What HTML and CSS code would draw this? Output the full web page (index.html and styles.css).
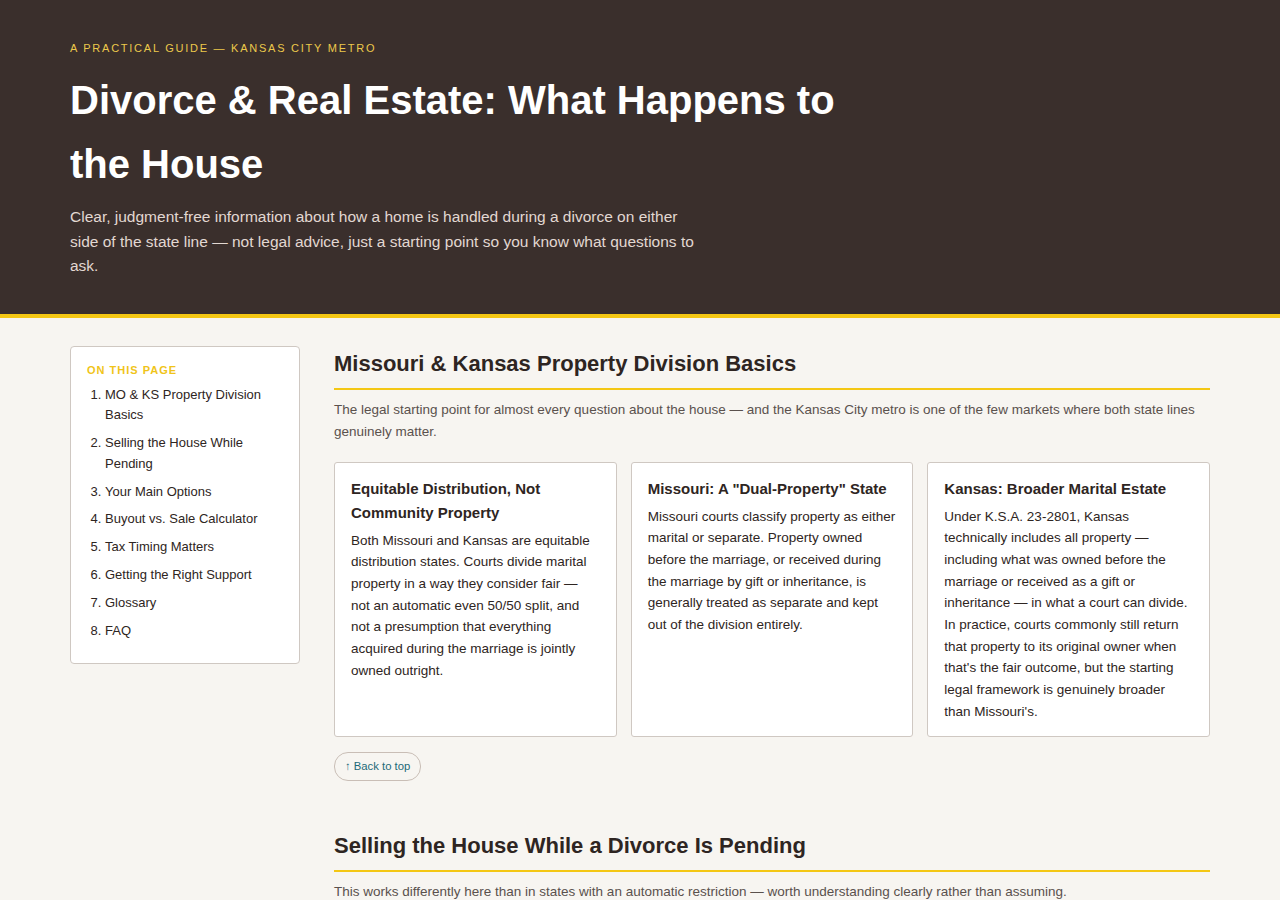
FILE: index.html
```html
<!DOCTYPE html>
<html lang="en">
<head>
  <meta charset="UTF-8">
  <title>Divorce &amp; Real Estate - Kansas City Metro</title>
  <link rel="stylesheet" href="styles.css">
</head>
<body id="top">

  <header class="hero">
    <div class="wrap">
      <p class="eyebrow">A Practical Guide — Kansas City Metro</p>
      <h1>Divorce &amp; Real Estate: What Happens to the House</h1>
      <p class="lead">Clear, judgment-free information about how a home is handled during a divorce on either side of the state line — not legal advice, just a starting point so you know what questions to ask.</p>
    </div>
  </header>

  <div class="wrap layout">
    <aside class="toc">
      <h4>On this page</h4>
      <ol>
        <li><a href="#basics">MO &amp; KS Property Division Basics</a></li>
        <li><a href="#selling">Selling the House While Pending</a></li>
        <li><a href="#options">Your Main Options</a></li>
        <li><a href="#calculator">Buyout vs. Sale Calculator</a></li>
        <li><a href="#tax">Tax Timing Matters</a></li>
        <li><a href="#support">Getting the Right Support</a></li>
        <li><a href="#glossary">Glossary</a></li>
        <li><a href="#faq">FAQ</a></li>
      </ol>
    </aside>

    <main>
      <section id="basics" class="section">
        <h2>Missouri &amp; Kansas Property Division Basics</h2>
        <p class="intro">The legal starting point for almost every question about the house — and the Kansas City metro is one of the few markets where both state lines genuinely matter.</p>

        <div class="cards">
          <div class="card">
            <h3>Equitable Distribution, Not Community Property</h3>
            <p>Both Missouri and Kansas are equitable distribution states. Courts divide marital property in a way they consider fair — not an automatic even 50/50 split, and not a presumption that everything acquired during the marriage is jointly owned outright.</p>
          </div>
          <div class="card">
            <h3>Missouri: A "Dual-Property" State</h3>
            <p>Missouri courts classify property as either marital or separate. Property owned before the marriage, or received during the marriage by gift or inheritance, is generally treated as separate and kept out of the division entirely.</p>
          </div>
          <div class="card">
            <h3>Kansas: Broader Marital Estate</h3>
            <p>Under K.S.A. 23-2801, Kansas technically includes all property — including what was owned before the marriage or received as a gift or inheritance — in what a court can divide. In practice, courts commonly still return that property to its original owner when that's the fair outcome, but the starting legal framework is genuinely broader than Missouri's.</p>
          </div>
        </div>

        <a class="back" href="#top">↑ Back to top</a>
      </section>

      <section id="selling" class="section">
        <h2>Selling the House While a Divorce Is Pending</h2>
        <p class="intro">This works differently here than in states with an automatic restriction — worth understanding clearly rather than assuming.</p>
      </section>
    </main>
  </div>

</body>
</html>
```

FILE: styles.css
```css
body {
  font-family: "Liberation Sans", Arial, sans-serif;
  background-color: #f7f5f1;
  color: #2e2522;
  margin: 0;
  padding: 0;
}

.wrap {
  max-width: 1140px;
  margin: 0 auto;
}

/* en-tête */
.hero {
  background-color: #3a2f2c;
  border-bottom: 4px solid #f4c714;
  padding: 40px 0 35px;
}

.eyebrow {
  margin: 0 0 12px;
  font-size: 11px;
  line-height: 16px;
  letter-spacing: 1.75px;
  text-transform: uppercase;
  color: #ecc94b;
}

.hero h1 {
  margin: 0 0 9px;
  max-width: 800px;
  font-size: 40px;
  line-height: 64px;
  color: #ffffff;
}

.lead {
  margin: 0;
  max-width: 630px;
  font-size: 15.5px;
  line-height: 24.5px;
  color: #e2d8d2;
}

/* mise en page */
.layout {
  display: grid;
  grid-template-columns: 230px 1fr;
  gap: 34px;
  padding-top: 28px;
  align-items: start;
}

.toc {
  background-color: white;
  border: 1px solid #cfc8c2;
  border-radius: 4px;
  padding: 16px 16px 15px;
}

.toc h4 {
  margin: 0 0 8px;
  font-size: 11px;
  line-height: 14px;
  letter-spacing: 1px;
  text-transform: uppercase;
  color: #f0c419;
}

.toc ol {
  margin: 0;
  padding-left: 18px;
  font-size: 13px;
  line-height: 20.8px;
}

.toc li {
  margin-bottom: 7px;
}

.toc a {
  color: #2e2522;
  text-decoration: none;
}

.section {
  margin-bottom: 47px;
}

.section h2 {
  margin: 0;
  padding: 4px 0 10px;
  font-size: 22px;
  line-height: 28px;
  border-bottom: 2px solid #f4c714;
}

.intro {
  margin: 9px 0 19px;
  font-size: 13.5px;
  line-height: 22px;
  color: #5a514d;
}

.cards {
  display: grid;
  grid-template-columns: repeat(3, 1fr);
  gap: 14px;
}

.card {
  background-color: white;
  border: 1px solid #cfc8c2;
  border-radius: 3px;
  padding: 14px 16px 13px;
}

.card h3 {
  margin: 0 0 5px;
  font-size: 15px;
  line-height: 24px;
}

.card p {
  margin: 0;
  font-size: 13.5px;
  line-height: 21.7px;
}

.back {
  display: inline-block;
  margin-top: 15px;
  padding: 7px 10px;
  border: 1px solid #c9beb6;
  border-radius: 14px;
  font-size: 11.3px;
  line-height: 13px;
  color: #1d6a78;
  text-decoration: none;
}

.back:hover {
  background-color: #efe9e3;
}
```
